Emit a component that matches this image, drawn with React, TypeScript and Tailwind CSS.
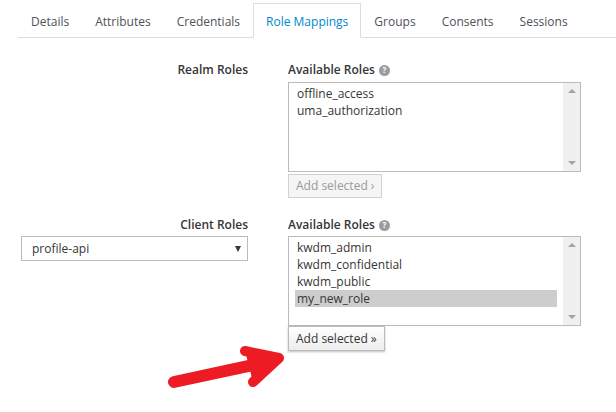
const tabs = ['Details', 'Attributes', 'Credentials', 'Role Mappings', 'Groups', 'Consents', 'Sessions'];

const HelpIcon = () => (
  <span className="ml-[4px] inline-flex h-[11px] w-[11px] items-center justify-center rounded-full bg-[#9c9c9c] text-[8px] font-bold leading-none text-white">
    ?
  </span>
);

const ListBox = ({ items, selected }: { items: string[]; selected?: string }) => (
  <div className="flex h-[90px] w-[293px] border border-[#bbbbbb] bg-white">
    <ul className="flex-1 px-[6px] pt-[2px]">
      {items.map((item) => (
        <li
          key={item}
          className={`h-[17px] pl-[2px] leading-[17px] ${item === selected ? 'bg-[#cdcdcd]' : ''}`}
        >
          {item}
        </li>
      ))}
    </ul>
    <div className="flex w-[17px] flex-col items-center justify-between bg-[#f0f0f0] py-[6px]">
      <span className="h-0 w-0 border-x-[4px] border-b-[4px] border-x-transparent border-b-[#a3a3a3]" />
      <span className="h-0 w-0 border-x-[4px] border-t-[4px] border-x-transparent border-t-[#a3a3a3]" />
    </div>
  </div>
);

const App = () => {
  return (
    <div
      className="relative h-[412px] w-[616px] overflow-hidden bg-white text-[12px] text-[#363636]"
      style={{ fontFamily: '"Open Sans", sans-serif' }}
    >
      <ul className="ml-[18px] mt-[3px] flex h-[35px] border-b border-[#dddddd] whitespace-nowrap text-[#4d5258]">
        {tabs.map((tab) => (
          <li
            key={tab}
            className={
              tab === 'Role Mappings'
                ? '-mb-px border border-[#dddddd] border-b-white bg-white px-[12px] pt-[9px] text-[#0088ce]'
                : 'px-[13px] pt-[10px]'
            }
          >
            {tab}
          </li>
        ))}
      </ul>

      <div className="mt-[23px] grid grid-cols-[248px_1fr] gap-x-[40px]">
        <div className="text-right font-semibold leading-[18px]">Realm Roles</div>
        <div>
          <div className="flex items-center font-semibold leading-[18px]">
            Available Roles
            <HelpIcon />
          </div>
          <div className="mt-[3px]">
            <ListBox items={['offline_access', 'uma_authorization']} />
          </div>
          <button className="mt-[2px] flex h-[24px] items-center border border-[#d1d1d1] bg-[#f5f5f5] px-[7px] text-[#9a9a9a]">
            Add selected ›
          </button>
        </div>

        <div className="mt-[18px]">
          <div className="text-right font-semibold leading-[18px]">Client Roles</div>
          <div className="ml-[21px] mt-[2px] flex h-[25px] items-center justify-between border border-[#bbbbbb] bg-white pl-[10px] pr-[6px]">
            <span>profile-api</span>
            <span className="h-0 w-0 border-x-[3.5px] border-t-[6px] border-x-transparent border-t-[#363636]" />
          </div>
        </div>
        <div className="mt-[18px]">
          <div className="flex items-center font-semibold leading-[18px]">
            Available Roles
            <HelpIcon />
          </div>
          <div className="mt-[2px]">
            <ListBox
              items={['kwdm_admin', 'kwdm_confidential', 'kwdm_public', 'my_new_role']}
              selected="my_new_role"
            />
          </div>
          <button className="flex h-[25px] items-center border border-[#bbbbbb] bg-gradient-to-b from-white to-[#ededed] px-[7px] shadow-[0_1px_2px_rgba(0,0,0,0.25)]">
            Add selected »
          </button>
        </div>
      </div>

      {/* annotation arrow drawn over the page */}
      <svg className="absolute left-[165px] top-[340px]" width="130" height="55" viewBox="165 340 130 55">
        <path d="M174 382 L258 364" stroke="#ed1c24" strokeWidth="12" strokeLinecap="round" fill="none" />
        <path
          d="M245 351 L279 358 L253 382"
          stroke="#ed1c24"
          strokeWidth="10"
          strokeLinejoin="round"
          strokeLinecap="round"
          fill="#ed1c24"
        />
      </svg>
    </div>
  );
};

export default App;
